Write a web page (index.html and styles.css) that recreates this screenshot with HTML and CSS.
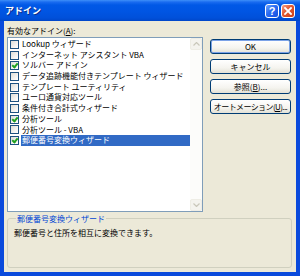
FILE: index.html
```html
<!DOCTYPE html>
<html lang="ja">
<head>
  <meta charset="UTF-8">
  <title>アドイン</title>
  <link rel="stylesheet" href="styles.css">
</head>
<body>
  <div class="window">
    <div class="titlebar">
      <span class="title">アドイン</span>
      <div class="title-buttons">
        <span class="tb help">?</span>
        <span class="tb close">
          <svg width="8" height="8" viewBox="0 0 8 8"><path d="M1 1L7 7M7 1L1 7" stroke="#fff" stroke-width="1.8" stroke-linecap="square"/></svg>
        </span>
      </div>
    </div>

    <div class="client">
      <div class="main">
        <div class="list-col">
          <div class="list-label">有効なアドイン(<u>A</u>):</div>
          <div class="listbox">
            <ul class="items">
              <li><span class="cb"></span><span class="name">Lookup ウィザード</span></li>
              <li><span class="cb"></span><span class="name">インターネット アシスタント VBA</span></li>
              <li><span class="cb checked"></span><span class="name">ソルバー アドイン</span></li>
              <li><span class="cb"></span><span class="name">データ追跡機能付きテンプレート ウィザード</span></li>
              <li><span class="cb"></span><span class="name">テンプレート ユーティリティ</span></li>
              <li><span class="cb"></span><span class="name">ユーロ通貨対応ツール</span></li>
              <li><span class="cb"></span><span class="name">条件付き合計式ウィザード</span></li>
              <li><span class="cb checked"></span><span class="name">分析ツール</span></li>
              <li><span class="cb"></span><span class="name">分析ツール - VBA</span></li>
              <li class="selected"><span class="cb checked"></span><span class="name">郵便番号変換ウィザード</span></li>
            </ul>
            <div class="scrollbar">
              <span class="sb-btn"><svg width="7" height="4" viewBox="0 0 7 4"><path d="M0.5 3.5L3.5 0.5L6.5 3.5" fill="none" stroke="#c9c7ba" stroke-width="1.2"/></svg></span>
              <span class="sb-track"></span>
              <span class="sb-btn"><svg width="7" height="4" viewBox="0 0 7 4"><path d="M0.5 0.5L3.5 3.5L6.5 0.5" fill="none" stroke="#c9c7ba" stroke-width="1.2"/></svg></span>
            </div>
          </div>
        </div>

        <div class="buttons">
          <button class="btn default">OK</button>
          <button class="btn">キャンセル</button>
          <button class="btn">参照(<u>B</u>)...</button>
          <button class="btn tight">オートメーション(<u>U</u>)...</button>
        </div>
      </div>

      <fieldset class="desc">
        <legend>郵便番号変換ウィザード</legend>
        <p>郵便番号と住所を相互に変換できます。</p>
      </fieldset>
    </div>
  </div>
</body>
</html>
```

FILE: styles.css
```css
body {
  margin: 0;
  font-family: "Noto Sans CJK JP", "Noto Sans", sans-serif;
  font-size: 8px;
  color: #000;
}
.window {
  width: 300px;
  height: 276px;
  background: #0a4adc;
  display: flex;
  flex-direction: column;
}
.titlebar {
  height: 21px;
  display: flex;
  align-items: center;
  justify-content: space-between;
  padding: 0 5px 0 5px;
  background: linear-gradient(#3d8ff9 0, #1a6cf0 2px, #0058e6 5px, #0055e3 55%, #0050da 85%, #0046c9 100%);
  box-sizing: border-box;
}
.title {
  color: #fff;
  font-weight: bold;
  font-size: 9px;
  text-shadow: 1px 1px 0 #0a2e8a;
}
.title-buttons {
  display: flex;
  gap: 2px;
}
.tb {
  width: 14px;
  height: 14px;
  box-sizing: border-box;
  border: 1px solid #fff;
  border-radius: 3px;
  display: flex;
  align-items: center;
  justify-content: center;
  color: #fff;
  font-family: "Liberation Sans", sans-serif;
  font-weight: bold;
  font-size: 11px;
}
.help {
  background: linear-gradient(135deg, #6fa5ff 0, #2a6cf2 45%, #1650e0 100%);
}
.close {
  background: linear-gradient(135deg, #f3a08a 0, #e2572f 45%, #c9401b 100%);
}
.client {
  flex: 1;
  margin: 0 4px 4px 4px;
  background: #ece9d8;
  padding: 4px 4px 4px 3px;
  display: flex;
  flex-direction: column;
}
.main {
  display: flex;
}
.list-col {
  width: 196px;
}
.list-label {
  height: 11px;
  line-height: 11px;
  margin-bottom: 1px;
}
.listbox {
  height: 175px;
  box-sizing: border-box;
  border: 1px solid #7f9db9;
  background: #fff;
  display: flex;
}
.items {
  list-style: none;
  margin: 0;
  padding: 1px 0 0 2px;
  flex: 1;
  white-space: nowrap;
  overflow: hidden;
}
.items li {
  height: 10.7px;
  display: flex;
  align-items: center;
}
.cb {
  width: 9px;
  height: 9px;
  box-sizing: border-box;
  border: 1px solid #1c5180;
  background: linear-gradient(135deg, #dcdcd7 0, #f6f6f4 70%, #fff 100%);
  margin-right: 2px;
  flex: none;
  position: relative;
}
.cb.checked::after {
  content: "";
  position: absolute;
  left: 2px;
  top: 0px;
  width: 2px;
  height: 4px;
  border: solid #21a121;
  border-width: 0 2px 2px 0;
  transform: rotate(40deg);
}
.name {
  flex: 1;
  height: 100%;
  line-height: 10.7px;
  padding-left: 1px;
}
.selected .name {
  background: #316ac5;
  color: #fff;
}
.scrollbar {
  width: 12px;
  display: flex;
  flex-direction: column;
  background: #fcfcfa;
}
.sb-btn {
  height: 12px;
  display: flex;
  align-items: center;
  justify-content: center;
  background: #f4f3ee;
  border: 1px solid #eeede5;
  box-sizing: border-box;
  border-radius: 2px;
}
.sb-track {
  flex: 1;
}
.buttons {
  width: 81px;
  margin-left: 7px;
  padding-top: 14px;
  display: flex;
  flex-direction: column;
  gap: 5px;
}
.btn {
  height: 15px;
  padding: 0;
  font: inherit;
  line-height: 12px;
  white-space: nowrap;
  overflow: hidden;
  color: #000;
  border: 1px solid #003c74;
  border-radius: 3px;
  background: linear-gradient(#fff 0, #f5f4ef 60%, #e3e1d6 100%);
}
.btn.tight {
  letter-spacing: -0.6px;
}
.btn.default {
  box-shadow: inset 0 0 0 1px #7ba2e7;
}
.desc {
  margin: 2px 0 0 0;
  padding: 2px 6px 0 6px;
  height: 54px;
  box-sizing: border-box;
  border: 1px solid #d0d0bf;
  border-radius: 3px;
}
.desc legend {
  padding: 0 1px;
  margin-left: 2px;
  color: #0046d5;
  line-height: 9px;
}
.desc p {
  margin: 2px 0 0 0;
}
```
